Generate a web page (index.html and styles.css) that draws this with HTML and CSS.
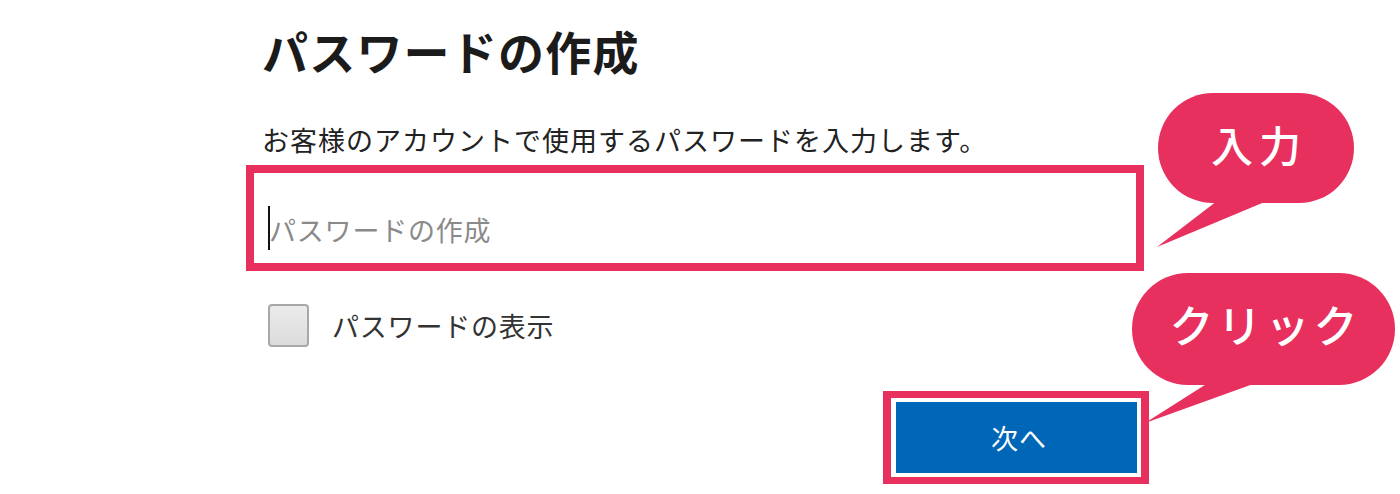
FILE: index.html
```html
<!DOCTYPE html>
<html lang="ja">
<head>
<meta charset="utf-8">
<title>パスワードの作成</title>
<link rel="stylesheet" href="styles.css">
</head>
<body>
<div class="page">
  <div class="form">
    <h1 class="title">パスワードの作成</h1>
    <p class="desc">お客様のアカウントで使用するパスワードを入力します。</p>
    <div class="field highlight">
      <span class="caret"></span>
      <input class="input" type="password" placeholder="パスワードの作成">
    </div>
    <label class="check-row">
      <input class="check" type="checkbox">
      <span class="check-label">パスワードの表示</span>
    </label>
    <div class="btn-wrap highlight">
      <button class="btn" type="button">次へ</button>
    </div>
  </div>

  <div class="callout callout-input">
    <div class="bubble">入力</div>
    <svg class="tail" width="130" height="50" viewBox="0 0 130 50">
      <polygon points="68,0 118,0 8,46" />
    </svg>
  </div>

  <div class="callout callout-click">
    <div class="bubble">クリック</div>
    <svg class="tail" width="130" height="50" viewBox="0 0 130 50">
      <polygon points="74,0 122,0 11,40" />
    </svg>
  </div>
</div>
</body>
</html>
```

FILE: styles.css
```css
* { box-sizing: border-box; }

html, body {
  margin: 0;
  padding: 0;
  background: #ffffff;
}

body {
  font-family: "Noto Sans CJK JP", "Noto Sans", sans-serif;
  color: #1b1b1b;
}

.page {
  position: relative;
  width: 1400px;
  height: 494px;
  overflow: hidden;
}

.form {
  display: flex;
  flex-direction: column;
  margin-left: 246px;
  width: 898px;
  padding-top: 20px;
}

.title {
  margin: 0;
  padding-left: 16px;
  font-size: 46px;
  line-height: 60px;
  font-weight: 700;
  color: #1b1b1b;
  letter-spacing: 1.2px;
}

.desc {
  margin: 40px 0 0;
  padding-left: 16px;
  font-size: 27px;
  line-height: 40px;
  color: #222222;
  letter-spacing: 1px;
}

.highlight {
  border: 8px solid #e8305e;
}

.field {
  position: relative;
  margin-top: 5px;
  height: 106px;
  background: #ffffff;
}

.input {
  display: block;
  width: 100%;
  height: 90px;
  padding: 22px 12px 0 15px;
  border: none;
  outline: none;
  background: transparent;
  font-family: "Noto Sans CJK JP", "Noto Sans", sans-serif;
  font-size: 27px;
  letter-spacing: 0.8px;
  color: #1b1b1b;
}

.input::placeholder {
  color: #8a8a8a;
}

.caret {
  position: absolute;
  left: 14px;
  top: 33px;
  width: 2px;
  height: 44px;
  background: #111111;
}

.check-row {
  display: flex;
  align-items: center;
  gap: 23px;
  margin-top: 33px;
  padding-left: 22px;
}

.check {
  appearance: none;
  -webkit-appearance: none;
  margin: 0;
  width: 41px;
  height: 43px;
  border: 2px solid #a8a8a8;
  border-radius: 4px;
  background: linear-gradient(#ebebeb, #dcdcdc);
}

.check-label {
  font-size: 27px;
  line-height: 40px;
  color: #333333;
  letter-spacing: 0.8px;
}

.btn-wrap {
  align-self: flex-start;
  margin-top: 44px;
  margin-left: 637px;
  border-width: 7px 8px;
  padding: 4px 4px 4px 5px;
  background: #ffffff;
}

.btn {
  display: block;
  width: 241px;
  height: 71px;
  border: none;
  background: #0067b8;
  color: #ffffff;
  font-family: "Noto Sans CJK JP", "Noto Sans", sans-serif;
  font-size: 27px;
  letter-spacing: 1px;
  padding: 0 0 0 5px;
}

.callout {
  position: absolute;
}

.bubble {
  position: relative;
  z-index: 1;
  display: flex;
  align-items: center;
  justify-content: center;
  background: #e8305e;
  color: #ffffff;
  font-weight: 500;
  border-radius: 60px;
}

.tail {
  position: absolute;
  fill: #e8305e;
}

.callout-input {
  left: 1158px;
  top: 93px;
}

.callout-input .bubble {
  width: 196px;
  height: 110px;
  font-size: 42px;
  letter-spacing: 6px;
  padding: 0 0 10px 6px;
}

.callout-input .tail {
  left: -9px;
  top: 108px;
}

.callout-click {
  left: 1132px;
  top: 273px;
}

.callout-click .bubble {
  width: 263px;
  height: 112px;
  font-size: 44px;
  letter-spacing: 4px;
  padding: 0 0 10px 4px;
}

.callout-click .tail {
  left: 2px;
  top: 110px;
}
```
